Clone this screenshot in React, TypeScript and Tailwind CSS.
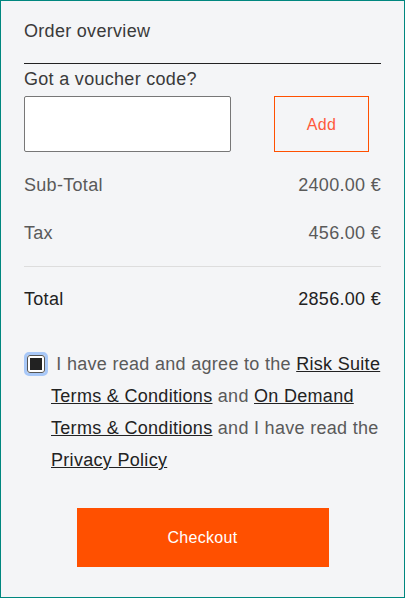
export default function App() {
  return (
    <div className="w-[405px] h-[598px] border border-[#00877f] bg-[#f4f5f7] font-['Liberation_Sans',sans-serif] text-[#333] tracking-[0.3px]">
      <div className="px-[23px] pt-[18px]">
        {/* Heading */}
        <h2 className="text-[18px] leading-[24px] text-[#3a3a3a] pb-[20px] border-b border-[#222]">
          Order overview
        </h2>

        {/* Voucher */}
        <div className="mt-[2px] text-[18px] leading-[26px] text-[#3a3a3a]">Got a voucher code?</div>
        <div className="flex items-start justify-between mt-[4px] pr-[12px]">
          <input className="w-[207px] h-[56px] bg-white border border-[#777] rounded-[2px] outline-none px-3" />
          <button className="w-[95px] h-[56px] border border-[#ff5000] text-[#ff5a3c] text-[16px] pt-[2px] bg-transparent">
            Add
          </button>
        </div>

        {/* Sums */}
        <div className="mt-[21px] flex justify-between text-[18px] leading-[24px] text-[#5a5a5a]">
          <span>Sub-Total</span>
          <span>2400.00 €</span>
        </div>
        <div className="mt-[24px] flex justify-between text-[18px] leading-[24px] text-[#5a5a5a] pb-[21px] border-b border-[#ddd]">
          <span>Tax</span>
          <span>456.00 €</span>
        </div>
        <div className="mt-[20px] flex justify-between text-[18px] leading-[24px] text-[#222]">
          <span>Total</span>
          <span>2856.00 €</span>
        </div>

        {/* Terms */}
        <div className="mt-[37px] flex items-start">
          <div className="mt-[4px] w-[24px] h-[24px] rounded-[5px] border-[3px] border-[#a8c8f8] flex items-center justify-center shrink-0">
            <div className="w-[18px] h-[18px] rounded-[3px] border border-[#555] bg-white flex items-center justify-center">
              <div className="w-[12px] h-[12px] bg-[#222]" />
            </div>
          </div>
          <p className="ml-[3px] text-[18px] leading-[32px] text-[#5a5a5a]">
            &nbsp;I have read and agree to the{" "}
            <a className="underline text-[#222]">Risk Suite Terms &amp; Conditions</a> and{" "}
            <a className="underline text-[#222]">On Demand Terms &amp; Conditions</a> and I have read the{" "}
            <a className="underline text-[#222]">Privacy Policy</a>
          </p>
        </div>

        {/* Checkout */}
        <div className="mt-[32px] flex justify-center">
          <button className="w-[252px] h-[59px] bg-[#ff5000] text-white text-[16px]">Checkout</button>
        </div>
      </div>
    </div>
  );
}
